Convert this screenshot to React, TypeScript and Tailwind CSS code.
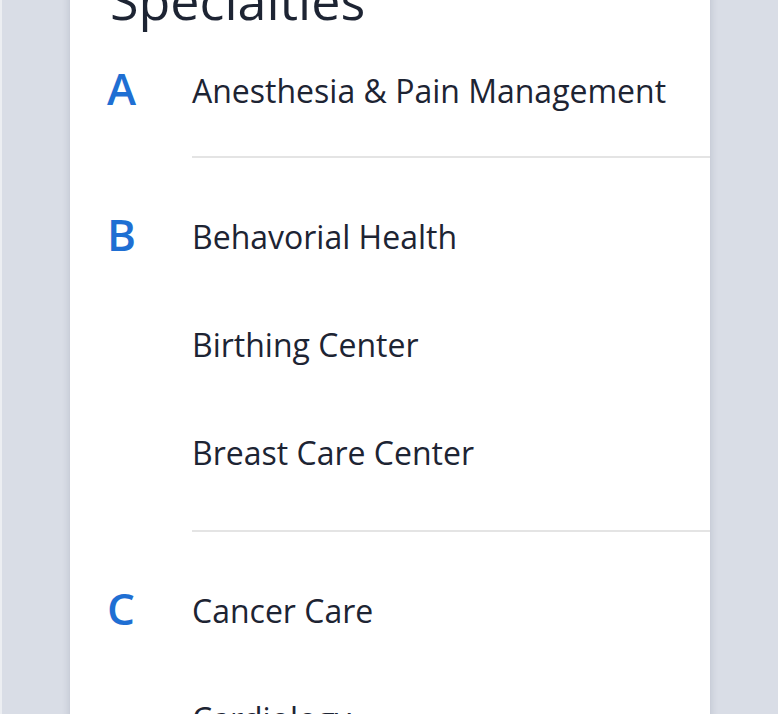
import React from 'react';

type Group = { letter: string; items: string[] };

const groups: Group[] = [
  { letter: 'A', items: ['Anesthesia & Pain Management'] },
  { letter: 'B', items: ['Behavorial Health', 'Birthing Center', 'Breast Care Center'] },
  { letter: 'C', items: ['Cancer Care', 'Cardiology'] },
];

const App: React.FC = () => {
  return (
    <div
      className="h-[714px] w-[778px] overflow-hidden bg-[#d9dde6] border-l-2 border-[#eceef2]"
      style={{ fontFamily: '"Open Sans", "Noto Sans", sans-serif' }}
    >
      <div className="ml-[68px] w-[640px] min-h-full bg-white shadow-[0_0_8px_rgba(40,50,80,0.18)] pl-[37px]">
        {/* Heading, scrolled partly out of view */}
        <h1 className="-mt-[26px] ml-[3px] h-[52px] text-[52px] leading-[52px] font-normal text-[#1d2433] mb-[45px]">
          Specialties
        </h1>

        {groups.map((group, gi) => (
          <div key={group.letter}>
            {gi > 0 && <div className="ml-[85px] h-[2px] bg-[#e4e4e4]" />}
            <div
              className={
                gi === 0
                  ? 'flex pb-[45px]'
                  : 'flex pt-[59px] pb-[57px]'
              }
            >
              <div className="w-[85px] -mt-[3px] text-[44px] leading-[40px] h-[40px] font-semibold text-[#1f6fd3]">
                {group.letter}
              </div>
              <ul className="flex flex-col gap-[68px]">
                {group.items.map((item) => (
                  <li
                    key={item}
                    className="h-[40px] text-[32px] leading-[40px] text-[#1d2433] whitespace-nowrap"
                  >
                    {item}
                  </li>
                ))}
              </ul>
            </div>
          </div>
        ))}
      </div>
    </div>
  );
};

export default App;
